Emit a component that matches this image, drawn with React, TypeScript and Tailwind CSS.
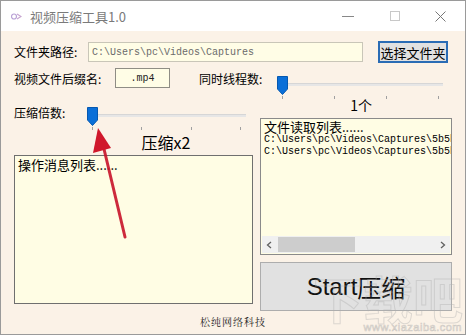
import React from "react";

const cjk = { fontFamily: '"Noto Sans CJK SC", "Noto Sans", sans-serif' };
const mono = { fontFamily: '"Liberation Mono", "Noto Sans CJK SC", monospace' };

function Slider({ width, ticks, thumbLeft }: { width: number; ticks: number[]; thumbLeft: number }) {
  return (
    <div className="relative h-[24px]" style={{ width }}>
      <div className="absolute left-0 right-0 top-[7px] h-[3px] bg-[#e6e6e6] border-t border-[#d6d6d6]" />
      <svg className="absolute top-0" style={{ left: thumbLeft }} width="11" height="19" viewBox="0 0 11 19">
        <path d="M0.5 0.5 H10.5 V13 L5.5 18.5 L0.5 13 Z" fill="#0a6fd8" stroke="#0558b0" />
      </svg>
      {ticks.map((t) => (
        <div key={t} className="absolute top-[20px] w-px h-[3px] bg-[#a0a0a0]" style={{ left: t }} />
      ))}
    </div>
  );
}

export default function App() {
  return (
    <div className="relative w-[466px] h-[335px] bg-[#fbf2e7] border border-[#9a9a9a] overflow-hidden" style={cjk}>
      {/* Title bar */}
      <div className="flex items-center h-[30px] bg-white">
        <svg className="ml-[10px]" width="11" height="9" viewBox="0 0 11 9">
          <circle cx="3" cy="4.5" r="2.5" fill="none" stroke="#b9a2d6" strokeWidth="1.2" />
          <path d="M6 2 L10 4.5 L6 7" fill="none" stroke="#c7a4d0" strokeWidth="1.2" />
        </svg>
        <span className="ml-[8px] text-[13px] text-[#7a7a7a] leading-none">视频压缩工具1.0</span>
        <div className="ml-auto flex items-center">
          <div className="w-[12px] h-px bg-[#888] mr-[36px]" />
          <div className="w-[10px] h-[10px] border border-[#c8c8c8] mr-[35px]" />
          <svg className="mr-[19px]" width="11" height="11" viewBox="0 0 11 11">
            <path d="M0.5 0.5 L10.5 10.5 M10.5 0.5 L0.5 10.5" stroke="#777" strokeWidth="1" />
          </svg>
        </div>
      </div>

      {/* Body */}
      <div className="px-[13px] text-[12px] text-black">
        {/* Row 1 */}
        <div className="flex items-center mt-[10px] h-[22px]">
          <span className="w-[74px] leading-none">文件夹路径:</span>
          <div className="w-[275px] h-[20px] bg-[#fffde6] border border-[#c9c6b8] flex items-center pl-[3px] text-[10px] text-[#6b6b6b]" style={mono}>
            C:\Users\pc\Videos\Captures
          </div>
          <div className="ml-[15px] w-[70px] h-[22px] bg-[#e1e1e1] border-2 border-[#2a6cb5] flex items-center justify-center text-[13px] leading-none">
            选择文件夹
          </div>
        </div>

        {/* Row 2 */}
        <div className="flex mt-[4px] h-[38px]">
          <span className="w-[101px] leading-none mt-[6px]">视频文件后缀名:</span>
          <div className="w-[55px] h-[20px] mt-[1px] bg-[#fffde6] border border-[#8f8d85] flex items-center justify-center text-[10px] text-[#222]" style={mono}>
            .mp4
          </div>
          <span className="ml-[29px] leading-none mt-[6px]">同时线程数:</span>
          <div className="ml-[16px] mt-[9px] relative">
            <Slider width={165} ticks={[4, 56, 108, 160]} thumbLeft={-1} />
            <span className="absolute left-[72px] top-[22px] text-[14px] leading-none">1个</span>
          </div>
        </div>

        {/* Columns */}
        <div className="flex">
          <div className="w-[241px] flex flex-col">
            <div className="flex h-[30px]">
              <span className="leading-none mt-[2px] w-[73px]">压缩倍数:</span>
              <div className="mt-[2px]">
                <Slider width={159} ticks={[5, 54, 104, 153]} thumbLeft={0} />
              </div>
            </div>
            <div className="text-center text-[16px] leading-none ml-[112px] w-[80px] -mt-[1px]">压缩x2</div>
            <div className="mt-[5px] h-[149px] bg-[#fffde4] border border-[#6f6f6f] px-[3px] pt-[1px] text-[13px] leading-[15px]">
              操作消息列表......
            </div>
          </div>

          <div className="ml-[7px] w-[192px] flex flex-col pt-[13px]">
            <div className="h-[137px] bg-[#fffde4] border border-[#8a8a8a] flex flex-col">
              <div className="flex-1 overflow-hidden px-[3px] pt-[1px] whitespace-nowrap">
                <div className="text-[13px] leading-[14px]">文件读取列表......</div>
                <div className="text-[10px] leading-[12px]" style={mono}>C:\Users\pc\Videos\Captures\5b5b</div>
                <div className="text-[10px] leading-[12px]" style={mono}>C:\Users\pc\Videos\Captures\5b5b</div>
              </div>
              <div className="h-[17px] mx-px mb-px bg-[#f0f0f0] flex items-center">
                <svg className="ml-[4px]" width="6" height="8" viewBox="0 0 6 8"><path d="M5 1 L1.5 4 L5 7" fill="none" stroke="#606060" strokeWidth="1.3" /></svg>
                <div className="ml-[6px] w-[77px] h-[15px] bg-[#cdcdcd]" />
                <svg className="ml-auto mr-[4px]" width="6" height="8" viewBox="0 0 6 8"><path d="M1 1 L4.5 4 L1 7" fill="none" stroke="#606060" strokeWidth="1.3" /></svg>
              </div>
            </div>
            <div className="mt-[7px] h-[49px] bg-[#e1e1e1] border border-[#adadad] flex items-center justify-center text-[24px] text-[#111] leading-none">
              <span style={{ fontFamily: '"Liberation Sans", "Noto Sans CJK SC", sans-serif' }}>Start</span>
              <span>压缩</span>
            </div>
          </div>
        </div>

        {/* Footer */}
        <div className="text-center text-[10px] leading-none mt-[6px] text-[#222] tracking-[1px]" style={{ fontFamily: '"Noto Serif CJK SC", "Noto Sans CJK SC", serif' }}>
          松纯网络科技
        </div>
      </div>

      {/* Watermark overlay */}
      <div className="absolute right-[2px] bottom-[12px] text-[50px] font-bold leading-none text-transparent pointer-events-none" style={{ ...cjk, WebkitTextStroke: "1px rgba(175,175,175,0.4)" }}>
        下载吧
      </div>
      <div className="absolute right-[3px] bottom-[1px] text-[11px] leading-none tracking-[0.5px] pointer-events-none text-transparent" style={{ fontFamily: '"Liberation Sans", sans-serif', WebkitTextStroke: "0.6px rgba(165,165,165,0.55)" }}>
        www.xiazaiba.com
      </div>

      {/* Red arrow overlay */}
      <svg className="absolute left-0 top-0 pointer-events-none" width="466" height="335" viewBox="0 0 466 335">
        <path d="M124 236 L103 148" stroke="#c8142a" strokeWidth="3" strokeLinecap="round" opacity="0.9" />
        <path d="M97 127 L92 152 L110 147 Z" fill="#d0182c" />
      </svg>
    </div>
  );
}
